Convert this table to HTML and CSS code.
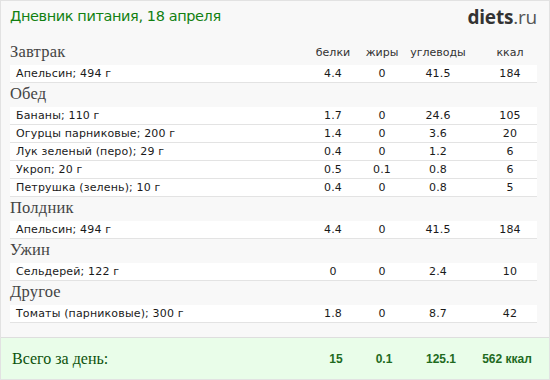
FILE: index.html
```html
<!DOCTYPE html>
<html lang="ru">
<head>
<meta charset="utf-8">
<link rel="stylesheet" href="styles.css">
</head>
<body>
<div class="page">
  <div class="top">
    <h1 class="title">Дневник питания, 18 апреля</h1>
    <div class="logo"><b>diets</b>.ru</div>
  </div>
  <div class="sections">
    <div class="head grid">
      <span class="meal">Завтрак</span>
      <span class="num">белки</span><span class="num">жиры</span><span class="num">углеводы</span><span class="num">ккал</span>
    </div>
    <div class="row grid"><span>Апельсин; 494 г</span><span class="num">4.4</span><span class="num">0</span><span class="num">41.5</span><span class="num">184</span></div>

    <div class="head grid"><span class="meal">Обед</span></div>
    <div class="row grid"><span>Бананы; 110 г</span><span class="num">1.7</span><span class="num">0</span><span class="num">24.6</span><span class="num">105</span></div>
    <div class="row grid"><span>Огурцы парниковые; 200 г</span><span class="num">1.4</span><span class="num">0</span><span class="num">3.6</span><span class="num">20</span></div>
    <div class="row grid"><span>Лук зеленый (перо); 29 г</span><span class="num">0.4</span><span class="num">0</span><span class="num">1.2</span><span class="num">6</span></div>
    <div class="row grid"><span>Укроп; 20 г</span><span class="num">0.5</span><span class="num">0.1</span><span class="num">0.8</span><span class="num">6</span></div>
    <div class="row grid"><span>Петрушка (зелень); 10 г</span><span class="num">0.4</span><span class="num">0</span><span class="num">0.8</span><span class="num">5</span></div>

    <div class="head grid"><span class="meal">Полдник</span></div>
    <div class="row grid"><span>Апельсин; 494 г</span><span class="num">4.4</span><span class="num">0</span><span class="num">41.5</span><span class="num">184</span></div>

    <div class="head grid"><span class="meal">Ужин</span></div>
    <div class="row grid"><span>Сельдерей; 122 г</span><span class="num">0</span><span class="num">0</span><span class="num">2.4</span><span class="num">10</span></div>

    <div class="head grid"><span class="meal">Другое</span></div>
    <div class="row grid"><span>Томаты (парниковые); 300 г</span><span class="num">1.8</span><span class="num">0</span><span class="num">8.7</span><span class="num">42</span></div>
  </div>
  <div class="total">
    <span class="total-label">Всего за день:</span>
    <span class="tnum">15</span><span class="tnum">0.1</span><span class="tnum">125.1</span><span class="tnum">562 ккал</span>
  </div>
</div>
</body>
</html>
```

FILE: styles.css
```css
html, body {
  margin: 0;
  padding: 0;
  background: #ffffff;
}

.page {
  width: 550px;
  height: 380px;
  box-sizing: border-box;
  border: 1px solid #e2e2e2;
  background: #f8f8f8;
  display: flex;
  flex-direction: column;
  font-family: "DejaVu Sans", Verdana, sans-serif;
}

.top {
  height: 40px;
  display: flex;
  justify-content: space-between;
  align-items: flex-start;
  padding: 0 12px 0 9px;
}

.title {
  margin: 7px 0 0 0;
  font-size: 14.5px;
  font-weight: normal;
  color: #118011;
  letter-spacing: -0.4px;
}

.logo {
  margin-top: 3px;
  font-family: "Open Sans", "DejaVu Sans", sans-serif;
  font-size: 19px;
  color: #555;
  letter-spacing: -0.2px;
}

.logo b {
  color: #333;
  font-weight: 700;
}

.sections {
  padding: 0 12px 0 9px;
}

.grid {
  display: grid;
  grid-template-columns: 1fr 76px 22px 90px 54px;
  align-items: end;
}

.num {
  justify-self: center;
  white-space: nowrap;
}

.head {
  height: 24px;
  box-sizing: border-box;
  padding-bottom: 4px;
  font-size: 11px;
  color: #333;
}

.meal {
  font-family: "Liberation Serif", "Times New Roman", serif;
  font-size: 16.5px;
  color: #444444;
  line-height: 18px;
  letter-spacing: 0.2px;
}

.head .num {
  line-height: 14px;
  padding-bottom: 1px;
}

.row {
  height: 17px;
  align-items: center;
  background: #ffffff;
  border-bottom: 1px solid #e3e3e3;
  font-size: 11px;
  color: #1a1a1a;
  padding-left: 6px;
  letter-spacing: 0.15px;
}

.total {
  margin-top: auto;
  height: 41px;
  border-top: 1px solid #dedede;
  background: #e9fde9;
  display: grid;
  grid-template-columns: 1fr 54px 42px 72px 60px;
  align-items: center;
  padding: 0 12px 0 11px;
}

.total-label {
  font-family: "Liberation Serif", "Times New Roman", serif;
  font-size: 16px;
  color: #0c520c;
}

.tnum {
  justify-self: center;
  white-space: nowrap;
  font-family: "Liberation Sans", Arial, sans-serif;
  font-weight: bold;
  font-size: 12px;
  color: #1f6b1f;
}
```
